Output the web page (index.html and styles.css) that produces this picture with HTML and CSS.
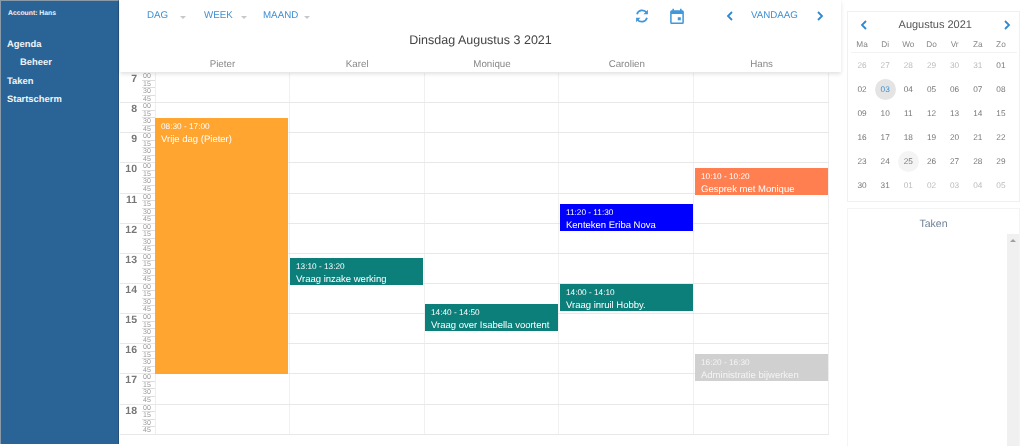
FILE: index.html
```html
<!DOCTYPE html>
<html lang="nl">
<head>
<meta charset="utf-8">
<title>Agenda</title>
<link rel="stylesheet" href="styles.css">
</head>
<body>
<div class="app">
  <nav class="sidebar">
    <div class="account">Account: Hans</div>
    <ul class="menu">
      <li>Agenda</li>
      <li class="sub">Beheer</li>
      <li>Taken</li>
      <li>Startscherm</li>
    </ul>
  </nav>
  <main class="main">
    <header class="head">
      <div class="toolbar">
        <div class="views">
          <span class="view view-dag">DAG<i class="caret"></i></span>
          <span class="view view-week">WEEK<i class="caret"></i></span>
          <span class="view view-maand">MAAND<i class="caret"></i></span>
        </div>
        <div class="actions">
          <svg class="icon" width="16" height="16" viewBox="0 0 16 16" fill="none"><path d="M3 6.2A5.4 5.4 0 0 1 12.6 4.6M13 9.8A5.4 5.4 0 0 1 3.4 11.4" stroke="#3f97dc" stroke-width="1.7"/><path d="M13.9 1.8v4.4H9.5zM2.1 14.2V9.8h4.4z" fill="#3f97dc"/></svg>
          <svg class="icon" width="16" height="16" viewBox="3 1 18 21" fill="#3f97dc"><path d="M19 4h-1V2h-2v2H8V2H6v2H5a2 2 0 0 0-2 2v14a2 2 0 0 0 2 2h14a2 2 0 0 0 2-2V6a2 2 0 0 0-2-2zm0 16H5V9h14v11zm-6-7h4v4h-4z"/></svg>
        </div>
        <div class="nav">
          <svg width="8" height="10" viewBox="0 0 8 10"><path d="M6 1 2 5l4 4" fill="none" stroke="#2f88d0" stroke-width="1.8"/></svg>
          <span class="today">VANDAAG</span>
          <svg width="8" height="10" viewBox="0 0 8 10"><path d="M2 1l4 4-4 4" fill="none" stroke="#2f88d0" stroke-width="1.8"/></svg>
        </div>
      </div>
      <h1 class="title">Dinsdag Augustus 3 2021</h1>
      <div class="names">
        <span>Pieter</span><span>Karel</span><span>Monique</span><span>Carolien</span><span>Hans</span>
      </div>
    </header>
    <div class="grid">
      <div class="hour"><b>7</b><div class="mins"><span>00</span><span>15</span><span>30</span><span>45</span></div><div class="cells"><i></i><i></i><i></i><i></i><i></i></div></div>
      <div class="hour"><b>8</b><div class="mins"><span>00</span><span>15</span><span>30</span><span>45</span></div><div class="cells"><i></i><i></i><i></i><i></i><i></i></div></div>
      <div class="hour"><b>9</b><div class="mins"><span>00</span><span>15</span><span>30</span><span>45</span></div><div class="cells"><i></i><i></i><i></i><i></i><i></i></div></div>
      <div class="hour"><b>10</b><div class="mins"><span>00</span><span>15</span><span>30</span><span>45</span></div><div class="cells"><i></i><i></i><i></i><i></i><i></i></div></div>
      <div class="hour"><b>11</b><div class="mins"><span>00</span><span>15</span><span>30</span><span>45</span></div><div class="cells"><i></i><i></i><i></i><i></i><i></i></div></div>
      <div class="hour"><b>12</b><div class="mins"><span>00</span><span>15</span><span>30</span><span>45</span></div><div class="cells"><i></i><i></i><i></i><i></i><i></i></div></div>
      <div class="hour"><b>13</b><div class="mins"><span>00</span><span>15</span><span>30</span><span>45</span></div><div class="cells"><i></i><i></i><i></i><i></i><i></i></div></div>
      <div class="hour"><b>14</b><div class="mins"><span>00</span><span>15</span><span>30</span><span>45</span></div><div class="cells"><i></i><i></i><i></i><i></i><i></i></div></div>
      <div class="hour"><b>15</b><div class="mins"><span>00</span><span>15</span><span>30</span><span>45</span></div><div class="cells"><i></i><i></i><i></i><i></i><i></i></div></div>
      <div class="hour"><b>16</b><div class="mins"><span>00</span><span>15</span><span>30</span><span>45</span></div><div class="cells"><i></i><i></i><i></i><i></i><i></i></div></div>
      <div class="hour"><b>17</b><div class="mins"><span>00</span><span>15</span><span>30</span><span>45</span></div><div class="cells"><i></i><i></i><i></i><i></i><i></i></div></div>
      <div class="hour"><b>18</b><div class="mins"><span>00</span><span>15</span><span>30</span><span>45</span></div><div class="cells"><i></i><i></i><i></i><i></i><i></i></div></div>
      <div class="event orange" style="left:35px;top:45px;width:133px;height:256px"><small>08:30 - 17:00</small><span>Vrije dag (Pieter)</span></div>
      <div class="event coral" style="left:575px;top:95px;width:133px;height:27px"><small>10:10 - 10:20</small><span>Gesprek met Monique</span></div>
      <div class="event blue" style="left:440px;top:131px;width:133px;height:27px"><small>11:20 - 11:30</small><span>Kenteken Eriba Nova</span></div>
      <div class="event teal" style="left:170px;top:185px;width:133px;height:27px"><small>13:10 - 13:20</small><span>Vraag inzake werking</span></div>
      <div class="event teal" style="left:440px;top:211px;width:133px;height:27px"><small>14:00 - 14:10</small><span>Vraag inruil Hobby.</span></div>
      <div class="event teal" style="left:305px;top:231px;width:133px;height:27px"><small>14:40 - 14:50</small><span>Vraag over Isabella voortent</span></div>
      <div class="event grey" style="left:575px;top:281px;width:133px;height:27px"><small>16:20 - 16:30</small><span>Administratie bijwerken</span></div>
    </div>
  </main>
  <aside class="aside">
    <section class="cal">
      <div class="cal-head">
        <svg width="8" height="10" viewBox="0 0 8 10"><path d="M6 1 2 5l4 4" fill="none" stroke="#2f88d0" stroke-width="1.8"/></svg>
        <span>Augustus 2021</span>
        <svg width="8" height="10" viewBox="0 0 8 10"><path d="M2 1l4 4-4 4" fill="none" stroke="#2f88d0" stroke-width="1.8"/></svg>
      </div>
      <div class="dow"><span>Ma</span><span>Di</span><span>Wo</span><span>Do</span><span>Vr</span><span>Za</span><span>Zo</span></div>
      <div class="days">
        <span class="off">26</span><span class="off">27</span><span class="off">28</span><span class="off">29</span><span class="off">30</span><span class="off">31</span><span>01</span>
        <span>02</span><span class="sel">03</span><span>04</span><span>05</span><span>06</span><span>07</span><span>08</span>
        <span>09</span><span>10</span><span>11</span><span>12</span><span>13</span><span>14</span><span>15</span>
        <span>16</span><span>17</span><span>18</span><span>19</span><span>20</span><span>21</span><span>22</span>
        <span>23</span><span>24</span><span class="now">25</span><span>26</span><span>27</span><span>28</span><span>29</span>
        <span>30</span><span>31</span><span class="off">01</span><span class="off">02</span><span class="off">03</span><span class="off">04</span><span class="off">05</span>
      </div>
    </section>
    <section class="tasks">
      <h2>Taken</h2>
      <div class="scroll"><i class="arrow"></i></div>
    </section>
  </aside>
</div>
</body>
</html>
```
FILE: styles.css
```css
* { box-sizing: border-box; }
html, body { margin: 0; height: 100%; overflow: hidden; background: #fff; }
body { font-family: "Liberation Sans", Arial, sans-serif; color: #555; text-rendering: geometricPrecision; }
.app { display: flex; height: 446px; filter: blur(.3px); }

.sidebar {
  width: 119px;
  flex: none;
  height: 444px;
  background: #2a6496;
  border-top: 1px solid #8a9aa8;
  border-left: 1px solid #8a9aa8;
  border-right: 1px solid #24507a;
  color: #f2f5f8;
  font-weight: bold;
  padding: 8px 6px 0;
}
.account { font-size: 6.8px; line-height: 9px; padding-left: 1px; }
.menu { list-style: none; margin: 17px 0 0; padding: 0; font-size: 9.4px; }
.menu li { line-height: 18.4px; }
.menu .sub { padding-left: 13px; }

.main { width: 722px; flex: none; padding-left: 1px; }
.head {
  height: 72px;
  box-shadow: 0 2px 4px rgba(0,0,0,.12);
  display: flex;
  flex-direction: column;
  position: relative;
  z-index: 2;
  background: #fff;
}
.toolbar { height: 31px; flex: none; display: flex; align-items: center; padding-left: 27px; }
.views { display: flex; width: 487px; }
.view { color: #3f8fd2; font-size: 9.75px; display: flex; align-items: center; }
.view-dag { width: 57px; }
.view-week { width: 59px; }
.caret {
  width: 0; height: 0; margin-left: 12px; margin-top: 3px;
  border-left: 3px solid transparent;
  border-right: 3px solid transparent;
  border-top: 3px solid #c4c8cc;
}
.view-week .caret { margin-left: 8px; }
.view-maand .caret { margin-left: 6px; }
.actions { display: flex; gap: 19px; width: 92px; }
.nav { display: flex; align-items: center; color: #3f8fd2; font-size: 9.75px; }
.today { margin: 0 18px 0 17px; }
.title { margin: 0; flex: none; font-size: 12.5px; font-weight: normal; line-height: 17px; text-align: center; color: #444; height: 25px; padding-top: 1px; }
.names {
  flex: none;
  display: grid;
  grid-template-columns: repeat(5, 134.8px);
  margin-left: 35px;
  font-size: 9.75px;
  line-height: 14px;
  color: #888;
  text-align: center;
  padding-top: 2px;
}

.grid { position: relative; width: 709px; height: 362px; margin-top: 1px; }
.hour { display: flex; height: 30.15px; border-bottom: 1px solid #e8e8e8; }
.hour b { width: 17px; margin-right: 5px; font-size: 10.5px; line-height: 12px; text-align: right; color: #777; }
.mins { width: 13px; display: flex; flex-direction: column; }
.mins span { height: 7.5px; font-size: 7px; line-height: 7px; color: #999; border-bottom: 1px solid #ddd; padding-left: 1px; }
.mins span:last-child { border-bottom: 0; }
.cells { flex: 1; display: grid; grid-template-columns: repeat(5, 1fr); border-right: 1px solid #eee; border-left: 1px solid #eee; }
.cells i { border-right: 1px solid #f0f0f0; }
.cells i:last-child { border-right: 0; }

.event {
  position: absolute;
  color: #fff;
  padding: 3px 6px 0;
  overflow: hidden;
  display: flex;
  flex-direction: column;
  white-space: nowrap;
}
.event small { font-size: 8.25px; line-height: 11px; }
.event span { font-size: 9.5px; line-height: 16px; }
.orange { background: #ffa530; }
.coral { background: #ff7f50; }
.blue { background: #0000ff; }
.teal { background: #0c7f7a; }
.grey { background: #d0d0d0; color: #f4f4f4; }

.aside { flex: 1; padding: 11px 4px 0 6px; display: flex; flex-direction: column; gap: 6px; }
.cal { height: 191px; flex: none; border: 1px solid #f0f0f0; padding: 3px 2px 0 2.5px; }
.cal-head { display: flex; justify-content: space-between; align-items: center; font-size: 11px; color: #555; height: 20px; padding: 0 6px 0 9px; }
.dow { display: grid; grid-template-columns: repeat(7, 23.15px); font-size: 8.25px; color: #888; text-align: center; line-height: 12px; height: 15px; border-bottom: 1px solid #f3f3f3; margin-top: 3px; padding-top: 1px; }
.days { display: grid; grid-template-columns: repeat(7, 23.15px); grid-auto-rows: 24px; font-size: 8.25px; color: #777; }
.days span { display: flex; align-items: center; justify-content: center; }
.days .off { color: #bbb; }
.days .sel { background: #e4e4e4; border-radius: 50%; color: #3f8fd2; width: 21px; height: 21px; margin: auto; }
.days .now { background: #f4f4f4; border-radius: 50%; width: 21px; height: 21px; margin: auto; }
.tasks { flex: 1; border: 1px solid #f4f4f4; border-bottom: 0; position: relative; }
.tasks h2 { margin: 0; font-size: 10.5px; font-weight: normal; text-align: center; color: #6d8296; line-height: 14px; padding-top: 8px; }
.scroll { position: absolute; right: 0; top: 25px; bottom: 0; width: 12px; background: #f0f0f0; display: flex; justify-content: center; padding-top: 5px; }
.arrow { width: 0; height: 0; border-left: 3px solid transparent; border-right: 3px solid transparent; border-bottom: 3px solid #a0a0a0; }
```
